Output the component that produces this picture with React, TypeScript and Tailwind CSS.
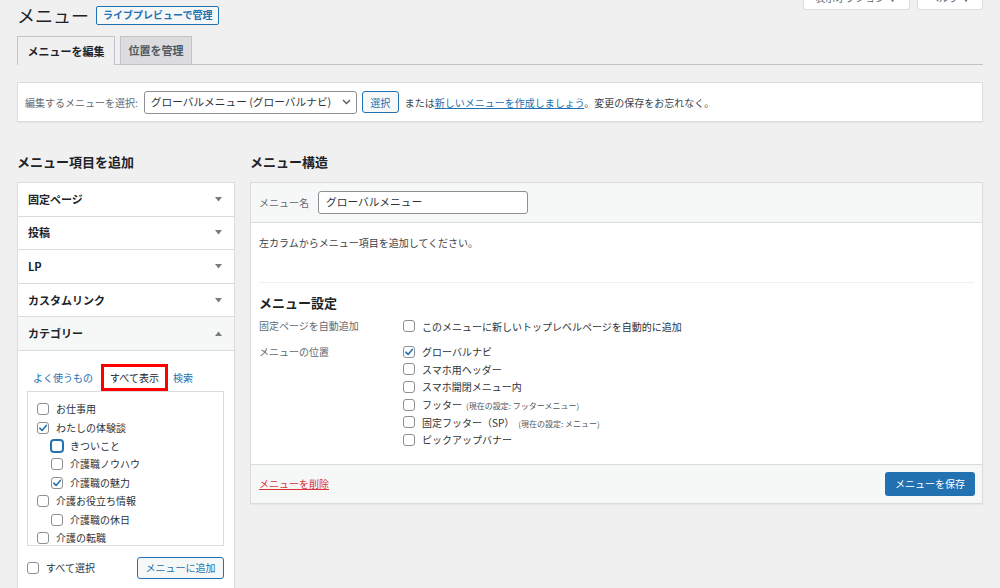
import React from "react";

const Check = ({ checked = false, focus = false }: { checked?: boolean; focus?: boolean }) => (
  <span
    className={
      "inline-flex h-[12px] w-[12px] shrink-0 items-center justify-center rounded-[3px] border bg-white " +
      (focus ? "border-[#2271b1] shadow-[0_0_0_1px_#2271b1]" : "border-[#8c8f94]")
    }
  >
    {checked && (
      <svg width="10" height="10" viewBox="0 0 10 10">
        <path d="M1.8 5.2 L4.1 7.4 L8.3 2.4" fill="none" stroke="#2271b1" strokeWidth="1.6" strokeLinecap="round" strokeLinejoin="round" />
      </svg>
    )}
  </span>
);

const Arrow = ({ up = false }: { up?: boolean }) => (
  <svg width="7" height="5" viewBox="0 0 7 5" className="shrink-0">
    {up ? <polygon points="0,5 7,5 3.5,0.5" fill="#787c82" /> : <polygon points="0,0 7,0 3.5,4.5" fill="#787c82" />}
  </svg>
);

const AccRow = ({ label, open = false }: { label: string; open?: boolean }) => (
  <div
    className={
      "flex h-[33.6px] items-center justify-between border-b border-[#dcdcde] pl-[10px] pr-[12px] " +
      (open ? "bg-[#f6f7f7]" : "bg-white")
    }
  >
    <span className="text-[11px] font-bold leading-none text-[#1d2327]">{label}</span>
    <Arrow up={open} />
  </div>
);

const catItems: { label: string; child?: boolean; checked?: boolean; focus?: boolean }[] = [
  { label: "お仕事用" },
  { label: "わたしの体験談", checked: true },
  { label: "きついこと", child: true, focus: true },
  { label: "介護職ノウハウ", child: true },
  { label: "介護職の魅力", child: true, checked: true },
  { label: "介護お役立ち情報" },
  { label: "介護職の休日", child: true },
  { label: "介護の転職" },
];

const locations: { label: string; note?: string; checked?: boolean }[] = [
  { label: "グローバルナビ", checked: true },
  { label: "スマホ用ヘッダー" },
  { label: "スマホ開閉メニュー内" },
  { label: "フッター", note: "(現在の設定: フッターメニュー)" },
  { label: "固定フッター（SP）", note: "(現在の設定: メニュー)" },
  { label: "ピックアップバナー" },
];

export default function App() {
  return (
    <div className="h-[588px] w-[1000px] overflow-hidden bg-[#f0f0f1] font-['Noto_Sans_CJK_JP','Noto_Sans',sans-serif] text-[#3c434a]">
      <div className="pl-[17px] pr-[17px]">
        {/* header */}
        <div className="flex h-[36px] items-start justify-between">
          <div className="flex items-center gap-[7px] pt-[4px]">
            <h1 className="text-[18px] font-normal leading-[22px] text-[#1d2327]">メニュー</h1>
            <span className="flex h-[19px] items-center rounded-[2px] border border-[#2271b1] bg-[#f6f7f7] px-[6px] text-[10px] font-semibold leading-none text-[#2271b1]">
              ライブプレビューで管理
            </span>
          </div>
          <div className="-mt-[14px] flex gap-[7px]">
            <span className="flex h-[24px] w-[107px] items-center justify-center rounded-b-[3px] border border-t-0 border-[#dcdcde] bg-white text-[10px] text-[#646970]">
              表示オプション ▼
            </span>
            <span className="flex h-[24px] w-[66px] items-center justify-center rounded-b-[3px] border border-t-0 border-[#dcdcde] bg-white text-[10px] text-[#646970]">
              ヘルプ ▼
            </span>
          </div>
        </div>

        {/* nav tabs */}
        <div className="flex h-[29px] items-end gap-[5px] border-b border-[#c3c4c7]">
          <div className="-mb-px flex h-[29px] w-[98px] items-center justify-center border border-b-0 border-[#c3c4c7] bg-[#f0f0f1] text-[11px] font-bold text-[#1d2327]">
            メニューを編集
          </div>
          <div className="flex h-[28px] w-[72px] items-center justify-center border border-b-0 border-[#c3c4c7] bg-[#dcdcde] text-[11px] font-semibold text-[#50575e]">
            位置を管理
          </div>
        </div>

        {/* select menu panel */}
        <div className="mt-[17px] flex h-[40px] items-center border border-[#dcdcde] bg-white pl-[7px] text-[10px] shadow-[0_1px_1px_rgba(0,0,0,0.04)]">
          <span className="text-[#646970]">編集するメニューを選択:</span>
          <span className="ml-[6px] flex h-[23px] w-[213px] items-center justify-between rounded-[3px] border border-[#8c8f94] bg-white pl-[6px] pr-[5px] text-[10.7px] text-[#2c3338]">
            グローバルメニュー (グローバルナビ)
            <svg width="9" height="6" viewBox="0 0 9 6">
              <path d="M1 1 L4.5 4.5 L8 1" fill="none" stroke="#50575e" strokeWidth="1.3" />
            </svg>
          </span>
          <span className="ml-[5px] flex h-[22px] w-[37px] items-center justify-center rounded-[3px] border border-[#2271b1] bg-[#f6f7f7] text-[#2271b1]">
            選択
          </span>
          <span className="ml-[6px] text-[#3c434a]">
            または<span className="text-[#2271b1] underline">新しいメニューを作成しましょう</span>。変更の保存をお忘れなく。
          </span>
        </div>

        {/* columns */}
        <div className="mt-[31px] flex gap-[15px]">
          {/* left */}
          <div className="w-[218px] shrink-0">
            <h2 className="mb-[12px] text-[13px] font-bold leading-[17px] text-[#1d2327]">メニュー項目を追加</h2>
            <div className="border border-b-0 border-[#dcdcde] bg-white">
              <AccRow label="固定ページ" />
              <AccRow label="投稿" />
              <AccRow label="LP" />
              <AccRow label="カスタムリンク" />
              <AccRow label="カテゴリー" open />
              <div className="pl-[9px] pr-[10px] pt-[13px]">
                <div className="flex h-[27px] items-center text-[10px]">
                  <span className="ml-[6px] text-[#2271b1]">よく使うもの</span>
                  <span className="ml-[8px] flex h-[27px] w-[67px] items-center justify-center border-[3px] border-[#ff0000] bg-white text-[#1d2327]">
                    すべて表示
                  </span>
                  <span className="ml-[5px] text-[#2271b1]">検索</span>
                </div>
                <div className="h-[155px] overflow-hidden border border-[#dcdcde] pt-[8px] pl-[9px]">
                  {catItems.map((it) => (
                    <div key={it.label} className={"flex h-[18.43px] items-center gap-[7px] " + (it.child ? "pl-[14px]" : "")}>
                      <Check checked={it.checked} focus={it.focus} />
                      <span className="text-[10px] leading-none text-[#2c3338]">{it.label}</span>
                    </div>
                  ))}
                </div>
                <div className="mt-[11px] flex items-center justify-between">
                  <div className="flex items-center gap-[7px]">
                    <Check />
                    <span className="text-[10px] text-[#2c3338]">すべて選択</span>
                  </div>
                  <span className="flex h-[22px] w-[87px] items-center justify-center rounded-[3px] border border-[#2271b1] bg-[#f6f7f7] text-[10px] text-[#2271b1]">
                    メニューに追加
                  </span>
                </div>
                <div className="h-[20px]" />
              </div>
            </div>
          </div>

          {/* right */}
          <div className="flex-1">
            <h2 className="mb-[12px] text-[13px] font-bold leading-[17px] text-[#1d2327]">メニュー構造</h2>
            <div className="border border-[#dcdcde] bg-white shadow-[0_1px_1px_rgba(0,0,0,0.04)]">
              <div className="flex h-[40px] items-center border-b border-[#dcdcde] bg-[#f6f7f7] pl-[8px]">
                <span className="text-[10px] text-[#646970]">メニュー名</span>
                <span className="ml-[9px] flex h-[23px] w-[210px] items-center rounded-[3px] border border-[#8c8f94] bg-white pl-[7px] text-[10.7px] text-[#2c3338]">
                  グローバルメニュー
                </span>
              </div>
              <div className="px-[8px]">
                <div className="flex h-[38px] items-center text-[10px] text-[#3c434a]">
                  左カラムからメニュー項目を追加してください。
                </div>
                <div className="mt-[21px] border-t border-[#f0f0f1]" />
                <h3 className="mt-[11px] text-[13px] font-bold leading-[17px] text-[#1d2327]">メニュー設定</h3>
                <div className="mt-[6px] flex text-[10px]">
                  <span className="w-[144px] leading-[18px] text-[#646970]">固定ページを自動追加</span>
                  <div className="flex h-[18px] items-center gap-[7px]">
                    <Check />
                    <span className="text-[#2c3338]">このメニューに新しいトップレベルページを自動的に追加</span>
                  </div>
                </div>
                <div className="mt-[8px] flex pb-[15px] text-[10px]">
                  <span className="w-[144px] leading-[18px] text-[#646970]">メニューの位置</span>
                  <div className="flex flex-col">
                    {locations.map((l) => (
                      <div key={l.label} className="flex h-[17.6px] items-center gap-[7px]">
                        <Check checked={l.checked} />
                        <span className="text-[#2c3338]">
                          {l.label}
                          {l.note && <span className="ml-[4px] text-[8px] text-[#50575e]">{l.note}</span>}
                        </span>
                      </div>
                    ))}
                  </div>
                </div>
              </div>
              <div className="flex h-[39px] items-center justify-between border-t border-[#dcdcde] bg-[#f6f7f7] pl-[8px] pr-[7px]">
                <span className="text-[10px] text-[#d63638] underline">メニューを削除</span>
                <span className="flex h-[24px] w-[90px] items-center justify-center rounded-[3px] bg-[#2271b1] text-[10px] text-white">
                  メニューを保存
                </span>
              </div>
            </div>
          </div>
        </div>
      </div>
    </div>
  );
}
